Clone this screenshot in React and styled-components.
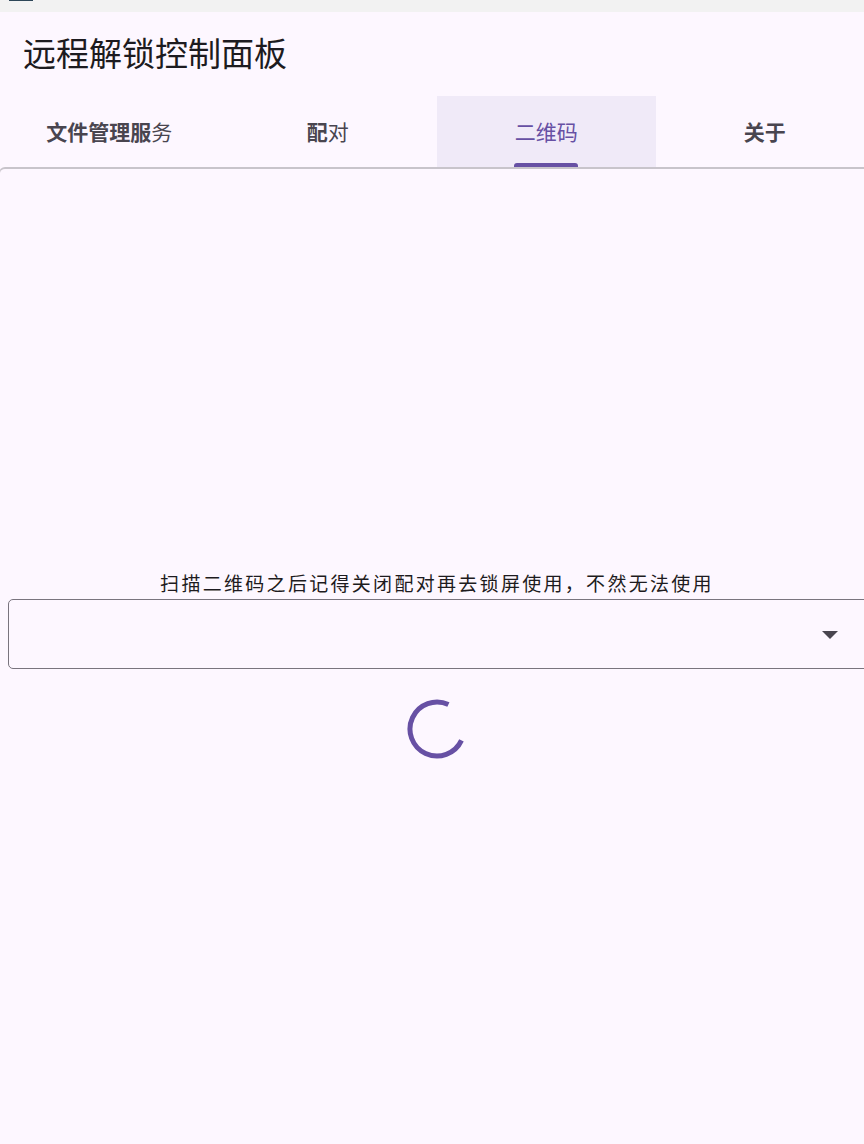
import styled, { createGlobalStyle } from "styled-components";

const GlobalStyle = createGlobalStyle`
  html, body {
    margin: 0;
    padding: 0;
    background: #fdf7ff;
    overflow: hidden;
  }
  body {
    font-family: "Noto Sans CJK SC", "Noto Sans", Roboto, sans-serif;
    color: #1d1b20;
  }
`;

const Page = styled.div`
  width: 874px;
  min-height: 1144px;
  display: flex;
  flex-direction: column;
  background: #fdf7ff;
`;

const StatusStrip = styled.div`
  height: 12px;
  background: #f2f2f2;
  padding-left: 9px;
`;

const StatusMark = styled.div`
  width: 24px;
  height: 1px;
  background: #2d4658;
`;

const Title = styled.h1`
  margin: 0;
  padding: 18px 23px 0;
  height: 84px;
  box-sizing: border-box;
  font-size: 33px;
  line-height: 44px;
  font-weight: 400;
  color: #1d1b20;
`;

const TabBar = styled.div`
  display: grid;
  grid-template-columns: repeat(4, 1fr);
  height: 71px;
`;

const Tab = styled.div`
  position: relative;
  display: flex;
  align-items: center;
  justify-content: center;
  font-size: 21px;
  color: ${(p) => (p.$active ? "#6750a4" : "#49454f")};
  background: ${(p) => (p.$active ? "#f0eaf8" : "transparent")};
`;

const TabLabel = styled.span`
  display: inline-block;
  line-height: 1;
`;

const Strong = styled.span`
  font-weight: 700;
`;

const Indicator = styled.div`
  position: absolute;
  bottom: 0;
  left: 50%;
  transform: translateX(-50%);
  width: 64px;
  height: 4px;
  border-radius: 3px 3px 0 0;
  background: #6750a4;
`;

const Panel = styled.div`
  flex: 1;
  margin-left: -1px;
  border-top: 2px solid #c8c4cb;
  border-left: 1px solid #c8c4cb;
  border-top-left-radius: 6px;
  display: flex;
  flex-direction: column;
  align-items: center;
  padding-top: 400px;
`;

const Hint = styled.p`
  margin: 0;
  font-size: 19px;
  letter-spacing: 2.3px;
  line-height: 28px;
  color: #1d1b20;
`;

const SelectBox = styled.div`
  align-self: stretch;
  margin: 2px 0 0 8px;
  height: 70px;
  box-sizing: border-box;
  border: 1px solid #79747e;
  border-radius: 5px;
  display: flex;
  align-items: center;
  justify-content: flex-end;
  padding-right: 35px;
`;

const Caret = styled.div`
  width: 0;
  height: 0;
  border-left: 8px solid transparent;
  border-right: 8px solid transparent;
  border-top: 8px solid #49454f;
  margin-top: 2px;
`;

const Spinner = styled.svg`
  margin-top: 29px;
  width: 62px;
  height: 62px;
`;

const tabs = [
  { key: "files", label: <><Strong>文件管理服</Strong>务</> },
  { key: "pair", label: <><Strong>配</Strong>对</> },
  { key: "qr", label: "二维码", active: true },
  { key: "about", label: <Strong>关于</Strong> },
];

export default function App() {
  // arc from 25deg clockwise round to -65deg (270deg sweep)
  const cx = 31;
  const cy = 31;
  const r = 27;
  const pt = (deg) => {
    const a = (deg * Math.PI) / 180;
    return [cx + r * Math.cos(a), cy + r * Math.sin(a)];
  };
  const [sx, sy] = pt(25);
  const [ex, ey] = pt(-65);

  return (
    <>
      <GlobalStyle />
      <Page>
        <StatusStrip>
          <StatusMark />
        </StatusStrip>
        <Title>远程解锁控制面板</Title>
        <TabBar>
          {tabs.map((t) => (
            <Tab key={t.key} $active={t.active}>
              <TabLabel>{t.label}</TabLabel>
              {t.active && <Indicator />}
            </Tab>
          ))}
        </TabBar>
        <Panel>
          <Hint>扫描二维码之后记得关闭配对再去锁屏使用，不然无法使用</Hint>
          <SelectBox>
            <Caret />
          </SelectBox>
          <Spinner viewBox="0 0 62 62">
            <path
              d={`M ${sx} ${sy} A ${r} ${r} 0 1 1 ${ex} ${ey}`}
              fill="none"
              stroke="#6750a4"
              strokeWidth="5"
            />
          </Spinner>
        </Panel>
      </Page>
    </>
  );
}
